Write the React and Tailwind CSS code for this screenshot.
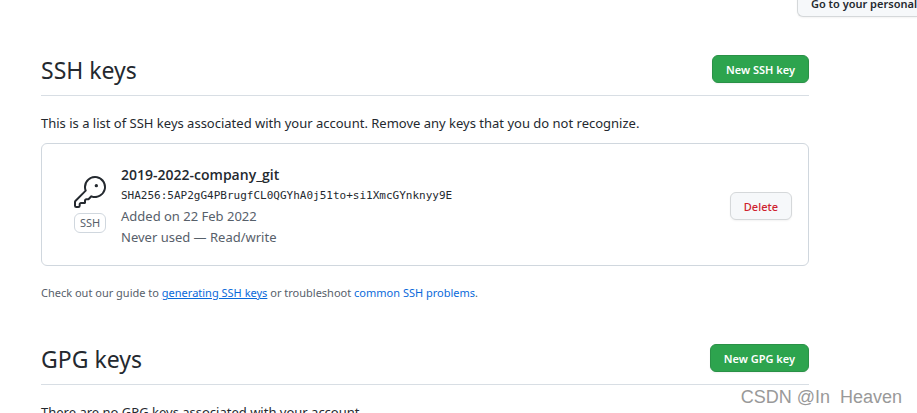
import React from "react";
import { GoKey } from "react-icons/go";

const sshKeys = [
  {
    id: 1,
    title: "2019-2022-company_git",
    fingerprint: "SHA256:5AP2gG4PBrugfCL0QGYhA0j51to+si1XmcGYnknyy9E",
    added: "Added on 22 Feb 2022",
    usage: "Never used — Read/write",
  },
];

export default function App() {
  return (
    <div className="relative h-screen overflow-hidden bg-white font-['Noto_Sans','Open_Sans',sans-serif] text-[13px] leading-[21px] text-[#24292f]">
      <header className="flex h-[17px] items-end justify-end">
        <button className="h-7 rounded-bl-md border border-r-0 border-[#d5d8da] bg-[#f6f8fa] pl-[13px] text-[11px] font-semibold whitespace-nowrap shadow-xs">
          Go to your personal
        </button>
      </header>

      <main className="pt-[38px] pr-[108px] pl-[41px]">
        <section>
          <Subhead title="SSH keys" action="New SSH key" />
          <p className="mt-[17px]">
            This is a list of SSH keys associated with your account. Remove any keys that you do not recognize.
          </p>
          <ul className="mt-[9px] rounded-md border border-[#d0d7de]">
            {sshKeys.map((item) => (
              <KeyRow key={item.id} item={item} />
            ))}
          </ul>
          <p className="mt-4 text-[11px] text-[#57606a]">
            Check out our guide to{" "}
            <a href="#generating" className="text-[#0969da] underline">generating SSH keys</a> or troubleshoot{" "}
            <a href="#problems" className="text-[#0969da]">common SSH problems</a>.
          </p>
        </section>

        <section className="mt-[41px]">
          <Subhead title="GPG keys" action="New GPG key" />
          <p className="mt-[17px]">There are no GPG keys associated with your account.</p>
        </section>
      </main>

      <span className="absolute right-[15px] bottom-1 font-['Liberation_Sans',sans-serif] text-[18px] leading-6 whitespace-pre text-[#999999]">
        CSDN @In  Heaven
      </span>
    </div>
  );
}

function Subhead({ title, action }) {
  return (
    <div className="flex items-center justify-between border-b border-[#d8dee4] pb-3">
      <h2 className="pt-0.5 text-[23px] leading-[26px]">{title}</h2>
      <button className="h-7 rounded-md border border-[#2a9147] bg-[#2da44e] px-[13px] text-[11px] font-semibold text-white shadow-xs">
        {action}
      </button>
    </div>
  );
}

function KeyRow({ item }) {
  return (
    <li className="flex items-center pt-5 pr-4 pb-[17px] pl-8">
      <div className="mr-[15px] flex flex-col items-center gap-[5px] pb-1">
        <GoKey className="size-8" />
        <span className="w-8 rounded-md border border-[#d0d7de] text-center text-[11px] leading-[18px] text-[#57606a]">
          SSH
        </span>
      </div>
      <div className="flex-1">
        <strong className="block font-['Open_Sans',sans-serif] text-[14px] font-semibold">{item.title}</strong>
        <code className="block font-['DejaVu_Sans_Mono','Liberation_Mono',monospace] text-[11px]">
          {item.fingerprint}
        </code>
        <span className="block text-[#57606a]">{item.added}</span>
        <span className="block text-[#57606a]">{item.usage}</span>
      </div>
      <button className="h-7 rounded-md border border-[#d5d8da] bg-[#f6f8fa] px-[13px] text-[11px] font-medium text-[#cf222e] shadow-xs">
        Delete
      </button>
    </li>
  );
}
